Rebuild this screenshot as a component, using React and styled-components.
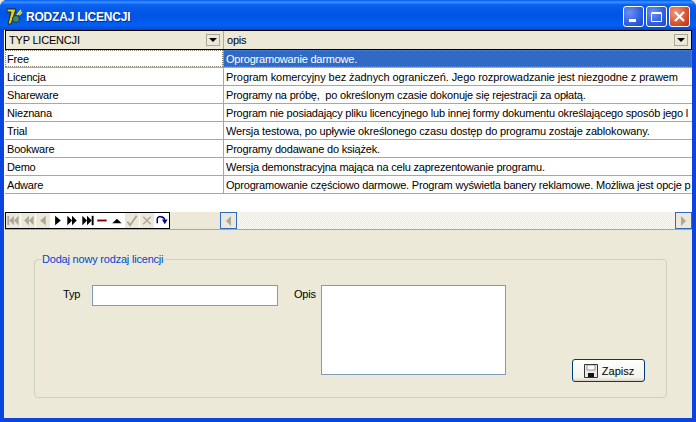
import React from 'react';
import styled, { createGlobalStyle } from 'styled-components';

const GlobalStyle = createGlobalStyle`
  html, body { margin: 0; padding: 0; background: #ece9d8; }
  body { font-family: "Liberation Sans", Arial, sans-serif; font-size: 11px; letter-spacing: -0.2px; color: #000; }
`;

const Window = styled.div`
  width: 696px;
  height: 422px;
  box-sizing: border-box;
  display: flex;
  flex-direction: column;
  overflow: hidden;
  background: #0a45e0;
  border-radius: 7px 7px 0 0;
`;

const TitleBar = styled.div`
  height: 30px;
  flex-shrink: 0;
  display: flex;
  align-items: center;
  padding: 3px 6px 0 6px;
  box-sizing: border-box;
  background: linear-gradient(to bottom, #0058ee 0%, #3a93ff 7%, #0a5ff0 16%, #0054e3 50%, #0060f4 85%, #0048d0 100%);
`;

const Title = styled.span`
  margin-left: 3px;
  flex: 1;
  font-size: 12px;
  font-weight: bold;
  letter-spacing: -0.2px;
  color: #fff;
  text-shadow: 1px 1px 0 #0a2c90;
`;

const Controls = styled.div`
  display: flex;
  gap: 2px;
`;

const CtlButton = styled.div`
  width: 21px;
  height: 21px;
  box-sizing: border-box;
  border: 1px solid #fff;
  border-radius: 3px;
  background: ${p => p.$close
    ? 'radial-gradient(circle at 30% 30%, #f09a80, #d8502c 60%, #b83010)'
    : 'radial-gradient(circle at 30% 30%, #6e90f0, #2f5fe0 60%, #1c46c8)'};
  display: flex;
  align-items: center;
  justify-content: center;
`;

const Client = styled.div`
  flex: 1;
  margin: 0 4px 4px;
  display: flex;
  flex-direction: column;
  background: #ece9d8;
  min-height: 0;
`;

const Grid = styled.div`
  height: 182px;
  flex-shrink: 0;
  background: #fff;
  overflow: hidden;
`;

const HeaderRow = styled.div`
  display: grid;
  grid-template-columns: 217px 1fr;
  height: 20px;
  box-sizing: border-box;
  border: 1px solid #000;
  background: #ece9d8;
  margin-left: 1px;
`;

const HeaderCell = styled.div`
  display: flex;
  align-items: center;
  justify-content: space-between;
  padding: 0 3px 0 3px;
  font-size: 11px;
  border-left: ${p => (p.$second ? '1px solid #aca899' : 'none')};
`;

const DropButton = styled.span`
  width: 14px;
  height: 12px;
  box-sizing: border-box;
  border: 1px solid #aca899;
  background: #ece9d8;
  display: flex;
  align-items: center;
  justify-content: center;
  &::after {
    content: '';
    border-left: 4px solid transparent;
    border-right: 4px solid transparent;
    border-top: 4px solid #000;
  }
`;

const Row = styled.div`
  display: grid;
  grid-template-columns: 218px 1fr;
  height: 18px;
  box-sizing: border-box;
  border-bottom: 1px solid #aca899;
  margin-left: 1px;
  white-space: nowrap;
`;

const Cell = styled.div`
  overflow: hidden;
  line-height: 18px;
  padding-left: 2px;
  letter-spacing: ${p => p.$track ?? -0.2}px;
  border-left: ${p => (p.$second ? '1px solid #aca899' : 'none')};
  background: ${p => (p.$selected ? '#316ac5' : 'transparent')};
  color: ${p => (p.$selected ? '#fff' : '#000')};
  outline: ${p => (p.$selected || p.$focus ? '1px dotted #8a8270' : 'none')};
  outline-offset: -1px;
`;

const NavRow = styled.div`
  height: 17px;
  flex-shrink: 0;
  display: flex;
  align-items: stretch;
  border-bottom: 1px solid #aca899;
  margin-left: 1px;
`;

const Navigator = styled.div`
  width: 165px;
  box-sizing: border-box;
  border: 1px solid #000;
  display: flex;
  align-items: stretch;
  background: #fff;
  margin-right: 50px;
  gap: 1px;
`;

const NavIcon = styled.svg`
  flex: 1;
  min-width: 0;
  height: 15px;
  background: ${p => (p.$off ? '#ece9d8' : '#fff')};
`;

const Scrollbar = styled.div`
  flex: 1;
  display: flex;
  justify-content: space-between;
  background-color: #f6f4ec;
  background-image: repeating-conic-gradient(#ece9d8 0 25%, #fbfaf5 0 50%);
  background-size: 2px 2px;
`;

const ScrollEnd = styled.div`
  width: 17px;
  box-sizing: border-box;
  border: 1px solid #316ac5;
  background: #ece9d8;
  display: flex;
  align-items: center;
  justify-content: center;
  &::after {
    content: '';
    border-top: 5px solid transparent;
    border-bottom: 5px solid transparent;
    ${p => (p.$right ? 'border-left: 5px solid #aca899;' : 'border-right: 5px solid #aca899;')}
  }
`;

const FormArea = styled.div`
  flex: 1;
  padding: 23px 25px 20px 30px;
  display: flex;
  min-height: 0;
`;

const Group = styled.fieldset`
  flex: 1;
  margin: 0;
  padding: 0;
  border: 1px solid #d0d0bf;
  border-radius: 4px;
  min-width: 0;
`;

const Legend = styled.legend`
  margin-left: 6px;
  padding: 0 1px;
  color: #0046d5;
  font-size: 11px;
`;

const Fields = styled.div`
  display: flex;
  align-items: flex-start;
  padding: 20px 0 0 28px;
`;

const FieldLabel = styled.label`
  width: ${p => p.$w}px;
  padding-top: 1px;
  flex-shrink: 0;
  line-height: 16px;
`;

const TextInput = styled.input`
  width: 186px;
  height: 21px;
  flex-shrink: 0;
  box-sizing: border-box;
  border: 1px solid #7f9db9;
  background: #fff;
  margin: 0 16px 0 0;
  padding: 0 2px;
  outline: none;
`;

const TextArea = styled.textarea`
  width: 185px;
  height: 90px;
  box-sizing: border-box;
  border: 1px solid #7f9db9;
  background: #fff;
  margin: 0;
  padding: 2px;
  resize: none;
  outline: none;
  flex-shrink: 0;
`;

const SaveButton = styled.button`
  width: 73px;
  height: 23px;
  margin: 74px 0 0 66px;
  flex-shrink: 0;
  box-sizing: border-box;
  border: 1px solid #003c74;
  border-radius: 3px;
  background: linear-gradient(to bottom, #ffffff, #f3f2ea 85%, #d6d0c5);
  display: flex;
  align-items: center;
  justify-content: center;
  gap: 3px;
  padding: 0;
  font-family: inherit;
  font-size: 11px;
  letter-spacing: 0;
  color: #000;
`;

const AppIcon = () => (
  <svg width="17" height="17" viewBox="0 0 17 17">
    <path d="M1 1 L10 1 L9 4 L5 16 L2 16 L5 4 L1 4 Z" fill="#e8d018" stroke="#1e2a10" strokeWidth="1" />
    <circle cx="10" cy="11" r="3.5" fill="#3f8a6a" stroke="#1c3a40" />
    <path d="M11 7 L15 2 M13 7 L16 4" stroke="#f0e030" strokeWidth="1.5" />
  </svg>
);

const Play = ({ flip, bars, doubled, color }) => (
  <g transform={flip ? 'translate(14 0) scale(-1 1)' : undefined} fill={color}>
    {doubled ? (
      <>
        <path d="M1 3 L6 8 L1 13 Z" />
        <path d="M6 3 L11 8 L6 13 Z" />
      </>
    ) : (
      <path d="M4 3 L10 8 L4 13 Z" />
    )}
    {bars && <rect x="11" y="3" width="2" height="10" />}
  </g>
);

const navButtons = [
  { flip: true, bars: true, doubled: true, off: true },
  { flip: true, doubled: true, off: true },
  { flip: true, off: true },
  {},
  { doubled: true },
  { bars: true, doubled: true },
];

// track: letter spacing per row, Tahoma's widths differ from Liberation's line by line
const rows = [
  { type: 'Free', desc: 'Oprogramowanie darmowe.' },
  { type: 'Licencja', desc: 'Program komercyjny bez żadnych ograniczeń. Jego rozprowadzanie jest niezgodne z prawem', track: -0.07 },
  { type: 'Shareware', desc: 'Programy na próbę,\u00a0 po określonym czasie dokonuje się rejestracji za opłatą.' },
  { type: 'Nieznana', desc: 'Program nie posiadający pliku licencyjnego lub innej formy dokumentu określającego sposób jego l' },
  { type: 'Trial', desc: 'Wersja testowa, po upływie określonego czasu dostęp do programu zostaje zablokowany.', track: -0.15 },
  { type: 'Bookware', desc: 'Programy dodawane do książek.' },
  { type: 'Demo', desc: 'Wersja demonstracyjna mająca na celu zaprezentowanie programu.' },
  { type: 'Adware', desc: 'Oprogramowanie częściowo darmowe. Program wyświetla banery reklamowe. Możliwa jest opcje p' },
];

export default function App() {
  return (
    <Window>
      <GlobalStyle />
      <TitleBar>
        <AppIcon />
        <Title>RODZAJ LICENCJI</Title>
        <Controls>
          <CtlButton>
            <svg width="13" height="13" viewBox="0 0 13 13"><rect x="2" y="9" width="7" height="3" fill="#fff" /></svg>
          </CtlButton>
          <CtlButton>
            <svg width="13" height="13" viewBox="0 0 13 13"><path d="M1.5 3.5h10v8h-10zM1.5 2.5h10" fill="none" stroke="#fff" /></svg>
          </CtlButton>
          <CtlButton $close>
            <svg width="13" height="13" viewBox="0 0 13 13"><path d="M2 2 L11 11 M11 2 L2 11" stroke="#fff" strokeWidth="2.2" /></svg>
          </CtlButton>
        </Controls>
      </TitleBar>
      <Client>
        <Grid>
          <HeaderRow>
            <HeaderCell>TYP LICENCJI<DropButton /></HeaderCell>
            <HeaderCell $second>opis<DropButton /></HeaderCell>
          </HeaderRow>
          {rows.map(({ type, desc, track }, i) => (
            <Row key={type}>
              <Cell $focus={i === 0}>{type}</Cell>
              <Cell $second $selected={i === 0} $track={track}>{desc}</Cell>
            </Row>
          ))}
        </Grid>
        <NavRow>
          <Navigator>
            {navButtons.map((b, i) => (
              <NavIcon key={i} viewBox="0 0 14 16" $off={b.off}>
                <Play {...b} color={b.off ? '#aca899' : '#000'} />
              </NavIcon>
            ))}
            <NavIcon viewBox="0 0 14 16"><rect x="2" y="7" width="10" height="2" fill="#800000" /></NavIcon>
            <NavIcon viewBox="0 0 14 16"><path d="M2 11 L7 6 L12 11 Z" fill="#000" /></NavIcon>
            <NavIcon viewBox="0 0 14 16" $off><path d="M2 9 L5 13 L12 3" fill="none" stroke="#aca899" strokeWidth="2" /></NavIcon>
            <NavIcon viewBox="0 0 14 16" $off><path d="M3 4 L11 12 M11 4 L3 12" stroke="#aca899" strokeWidth="1.5" /></NavIcon>
            <NavIcon viewBox="0 0 14 16"><path d="M2 11 V6 C2 3 9 3 10 7" fill="none" stroke="#000080" strokeWidth="1.6" /><path d="M7 7 H13 L10 12 Z" fill="#000080" /></NavIcon>
          </Navigator>
          <Scrollbar>
            <ScrollEnd />
            <ScrollEnd $right />
          </Scrollbar>
        </NavRow>
        <FormArea>
          <Group>
            <Legend>Dodaj nowy rodzaj licencji</Legend>
            <Fields>
              <FieldLabel $w={29}>Typ</FieldLabel>
              <TextInput type="text" />
              <FieldLabel $w={27}>Opis</FieldLabel>
              <TextArea />
              <SaveButton>
                <svg width="16" height="16" viewBox="0 0 16 16">
                  <path d="M1.5 1.5h13v13h-13z" fill="#e8e8e8" stroke="#333" />
                  <rect x="4" y="2" width="8" height="5" fill="#fff" stroke="#555" strokeWidth="0.6" />
                  <rect x="5" y="10" width="6" height="4" fill="#111" />
                </svg>
                Zapisz
              </SaveButton>
            </Fields>
          </Group>
        </FormArea>
      </Client>
    </Window>
  );
}
